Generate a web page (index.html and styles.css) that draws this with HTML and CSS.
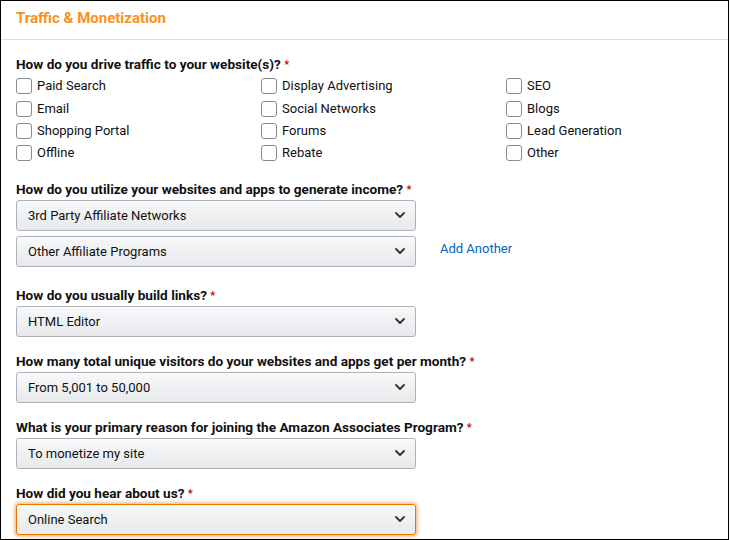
FILE: index.html
```html
<!DOCTYPE html>
<html lang="en">
<head>
<meta charset="utf-8">
<title>Traffic &amp; Monetization</title>
<link rel="stylesheet" href="styles.css">
</head>
<body>
<div class="panel">
  <div class="panel-head"><h2 class="panel-title">Traffic &amp; Monetization</h2></div>
  <div class="panel-body">
    <div class="group group-checks">
      <div class="label">How do you drive traffic to your website(s)? <span class="req">*</span></div>
      <div class="checks">
        <label class="check"><span class="box"></span>Paid Search</label>
        <label class="check"><span class="box"></span>Display Advertising</label>
        <label class="check"><span class="box"></span>SEO</label>
        <label class="check"><span class="box"></span>Email</label>
        <label class="check"><span class="box"></span>Social Networks</label>
        <label class="check"><span class="box"></span>Blogs</label>
        <label class="check"><span class="box"></span>Shopping Portal</label>
        <label class="check"><span class="box"></span>Forums</label>
        <label class="check"><span class="box"></span>Lead Generation</label>
        <label class="check"><span class="box"></span>Offline</label>
        <label class="check"><span class="box"></span>Rebate</label>
        <label class="check"><span class="box"></span>Other</label>
      </div>
    </div>

    <div class="group group-multi">
      <div class="label">How do you utilize your websites and apps to generate income? <span class="req">*</span></div>
      <div class="select-row">
        <div class="select"><span>3rd Party Affiliate Networks</span><svg class="chev" width="10" height="6" viewBox="0 0 10 6"><path d="M1 1l4 4 4-4" fill="none" stroke="#333" stroke-width="1.8" stroke-linecap="round" stroke-linejoin="round"/></svg></div>
      </div>
      <div class="select-row">
        <div class="select"><span>Other Affiliate Programs</span><svg class="chev" width="10" height="6" viewBox="0 0 10 6"><path d="M1 1l4 4 4-4" fill="none" stroke="#333" stroke-width="1.8" stroke-linecap="round" stroke-linejoin="round"/></svg></div>
        <a class="add-link" href="#">Add Another</a>
      </div>
    </div>

    <div class="group">
      <div class="label">How do you usually build links? <span class="req">*</span></div>
      <div class="select"><span>HTML Editor</span><svg class="chev" width="10" height="6" viewBox="0 0 10 6"><path d="M1 1l4 4 4-4" fill="none" stroke="#333" stroke-width="1.8" stroke-linecap="round" stroke-linejoin="round"/></svg></div>
    </div>

    <div class="group">
      <div class="label">How many total unique visitors do your websites and apps get per month? <span class="req">*</span></div>
      <div class="select"><span>From 5,001 to 50,000</span><svg class="chev" width="10" height="6" viewBox="0 0 10 6"><path d="M1 1l4 4 4-4" fill="none" stroke="#333" stroke-width="1.8" stroke-linecap="round" stroke-linejoin="round"/></svg></div>
    </div>

    <div class="group">
      <div class="label">What is your primary reason for joining the Amazon Associates Program? <span class="req">*</span></div>
      <div class="select"><span>To monetize my site</span><svg class="chev" width="10" height="6" viewBox="0 0 10 6"><path d="M1 1l4 4 4-4" fill="none" stroke="#333" stroke-width="1.8" stroke-linecap="round" stroke-linejoin="round"/></svg></div>
    </div>

    <div class="group">
      <div class="label">How did you hear about us? <span class="req">*</span></div>
      <div class="select focused"><span>Online Search</span><svg class="chev" width="10" height="6" viewBox="0 0 10 6"><path d="M1 1l4 4 4-4" fill="none" stroke="#333" stroke-width="1.8" stroke-linecap="round" stroke-linejoin="round"/></svg></div>
    </div>
  </div>
</div>
</body>
</html>
```

FILE: styles.css
```css
* { box-sizing: border-box; }
html, body { margin: 0; padding: 0; background: #fff; }
body {
  font-family: Roboto, "Liberation Sans", Arial, sans-serif;
  font-size: 13px;
  color: #111;
}
.panel {
  width: 729px;
  height: 540px;
  border: 1px solid #000;
  overflow: hidden;
}
.panel-head {
  height: 39px;
  border-bottom: 1px solid #ddd;
  padding: 0 15px 4px;
  display: flex;
  align-items: center;
}
.panel-title {
  margin: 0;
  font-size: 15px;
  font-weight: 700;
  color: #f7931e;
}
.panel-body {
  padding: 15px 15px 0;
}
.group { margin-bottom: 15px; }
.group-checks { margin-bottom: 15px; }
.group-multi { margin-bottom: 19px; }
.label {
  font-weight: 700;
  font-size: 13.6px;
  line-height: 19px;
  margin-bottom: 1px;
}
.group-checks .label { margin-bottom: 1px; }
.req { color: #c40000; font-size: 11px; vertical-align: 1px; }
.checks {
  display: grid;
  grid-template-columns: repeat(3, 245px);
  grid-auto-rows: 22.4px;
}
.check {
  display: flex;
  align-items: center;
  gap: 5px;
  line-height: 16px;
}
.box {
  width: 16px;
  height: 16px;
  border: 1px solid #888c8c;
  border-radius: 3px;
  background: #fff;
  flex: none;
}
.select-row {
  display: flex;
  align-items: center;
  gap: 24px;
}
.select-row + .select-row { margin-top: 5px; }
.select {
  width: 400px;
  height: 31px;
  border: 1px solid #adb1b8;
  border-radius: 3px;
  background: linear-gradient(#f7f8fa, #e7e9ec);
  box-shadow: inset 0 1px 0 rgba(255,255,255,.6);
  display: flex;
  align-items: center;
  justify-content: space-between;
  padding: 0 10px 0 11px;
  color: #111;
}
.select.focused {
  border-color: #e77600;
  box-shadow: 0 0 3px 2px rgba(228,121,17,.45);
}
.chev { flex: none; }
.add-link {
  color: #0066c0;
  text-decoration: none;
  margin-bottom: 5px;
}
```
